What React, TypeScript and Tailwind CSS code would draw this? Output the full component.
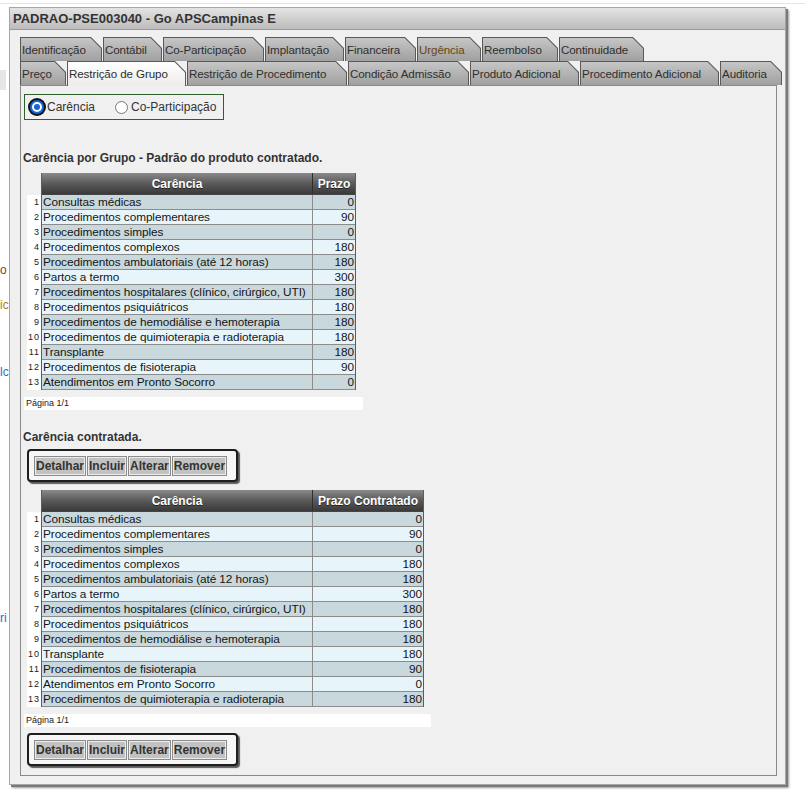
import React from "react";

type Row = [string, string];

const padrao: Row[] = [
  ["Consultas médicas", "0"],
  ["Procedimentos complementares", "90"],
  ["Procedimentos simples", "0"],
  ["Procedimentos complexos", "180"],
  ["Procedimentos ambulatoriais (até 12 horas)", "180"],
  ["Partos a termo", "300"],
  ["Procedimentos hospitalares (clínico, cirúrgico, UTI)", "180"],
  ["Procedimentos psiquiátricos", "180"],
  ["Procedimentos de hemodiálise e hemoterapia", "180"],
  ["Procedimentos de quimioterapia e radioterapia", "180"],
  ["Transplante", "180"],
  ["Procedimentos de fisioterapia", "90"],
  ["Atendimentos em Pronto Socorro", "0"],
];

const contratada: Row[] = [
  ["Consultas médicas", "0"],
  ["Procedimentos complementares", "90"],
  ["Procedimentos simples", "0"],
  ["Procedimentos complexos", "180"],
  ["Procedimentos ambulatoriais (até 12 horas)", "180"],
  ["Partos a termo", "300"],
  ["Procedimentos hospitalares (clínico, cirúrgico, UTI)", "180"],
  ["Procedimentos psiquiátricos", "180"],
  ["Procedimentos de hemodiálise e hemoterapia", "180"],
  ["Transplante", "180"],
  ["Procedimentos de fisioterapia", "90"],
  ["Atendimentos em Pronto Socorro", "0"],
  ["Procedimentos de quimioterapia e radioterapia", "180"],
];

const tabsTop = [
  { label: "Identificação", w: "w-[82px]" },
  { label: "Contábil", w: "w-[59px]" },
  { label: "Co-Participação", w: "w-[101px]" },
  { label: "Implantação", w: "w-[79px]" },
  { label: "Financeira", w: "w-[71px]" },
  { label: "Urgência", w: "w-[64px]", color: "text-[#6a4512]" },
  { label: "Reembolso", w: "w-[76px]" },
  { label: "Continuidade", w: "w-[85px]" },
];

const tabsBottom = [
  { label: "Preço", w: "w-[46px]" },
  { label: "Restrição de Grupo", w: "w-[119px]", active: true },
  { label: "Restrição de Procedimento", w: "w-[160px]" },
  { label: "Condição Admissão", w: "w-[121px]" },
  { label: "Produto Adicional", w: "w-[109px]" },
  { label: "Procedimento Adicional", w: "w-[139px]" },
  { label: "Auditoria", w: "w-[62px]" },
];

function Tab({ label, w, active, color }: { label: string; w: string; active?: boolean; color?: string }) {
  return (
    <div
      className={`${w} ${active ? "relative z-10 -mb-px" : ""} shrink-0 bg-[#595959] px-px pt-px mr-px [clip-path:polygon(0_0,calc(100%_-_11px)_0,100%_11px,100%_100%,0_100%)]`}
    >
      <div
        className={`h-full flex items-center pl-px text-[11.6px] tracking-[-0.1px] whitespace-nowrap ${color ?? "text-[#2e2e2e]"} ${
          active ? "bg-gradient-to-b from-[#ffffff] to-[#ececec]" : "bg-gradient-to-b from-[#c6c6c6] to-[#a0a0a0]"
        } [clip-path:polygon(0_0,calc(100%_-_10.5px)_0,100%_10.5px,100%_100%,0_100%)]`}
      >
        {label}
      </div>
    </div>
  );
}

function Grid({ rows, col2, total, page }: { rows: Row[]; col2: string; total: string; page: string }) {
  return (
    <>
      <div className="flex mt-[8px] ml-[6px]">
        <div className="w-[14px] flex flex-col pt-[22px]">
          <div className="bg-white">
            {rows.map((_, i) => (
              <div key={i} className="h-[15px] flex items-center justify-end pr-px text-[9px] leading-none text-[#222] tracking-[1px]">
                {i + 1}
              </div>
            ))}
          </div>
        </div>
        <div className={`${total} border-l border-r border-[#5c5c5c]`}>
          <div className="h-[22px] flex bg-gradient-to-b from-[#8a8a8a] via-[#5a5a5a] to-[#3a3a3a] text-white font-bold text-[12px] border-b border-[#444]">
            <div className="w-[271px] flex items-center justify-center border-r border-[#2e2e2e] [text-shadow:0_1px_0_#222]">Carência</div>
            <div className="flex-1 flex items-center justify-center [text-shadow:0_1px_0_#222]">{col2}</div>
          </div>
          {rows.map(([name, val], i) => (
            <div
              key={i}
              className={`h-[15px] flex text-[11.8px] tracking-[-0.08px] leading-[15px] text-[#151515] border-b border-[#8c8c8c] ${
                i % 2 === 0 ? "bg-[#c9d8dc]" : "bg-[#e7f5fa]"
              }`}
            >
              <div className="w-[271px] pl-px whitespace-nowrap overflow-hidden border-r border-[#8c8c8c]">{name}</div>
              <div className="flex-1 text-right pr-px">{val}</div>
            </div>
          ))}
        </div>
      </div>
      <div className={`${page} ml-[3px] mt-[7px] h-[13px] bg-white text-[9px] leading-[13px] pl-[2px] text-[#222]`}>Página 1/1</div>
    </>
  );
}

function Buttons() {
  return (
    <div className="ml-[6px] w-[211px] h-[33px] rounded-[4px] border-2 border-[#1e1e1e] bg-[#f6f6f6] shadow-[2px_2px_1px_#5a5a5a] flex items-center pl-[5px] gap-[1px]">
      {["Detalhar", "Incluir", "Alterar", "Remover"].map((b) => (
        <button
          key={b}
          className="h-[20px] px-px border border-[#8a8a8a] bg-[#c2c2c2] shadow-[inset_0_0_0_1px_#ececec] text-[12px] font-bold text-[#333] leading-none"
        >
          {b}
        </button>
      ))}
    </div>
  );
}

export default function App() {
  return (
    <div className="w-[805px] h-[795px] bg-white overflow-hidden font-['Liberation_Sans',Arial,sans-serif] flex flex-col">
      <div className="mt-[3px] h-px bg-[#e6e6e6]" />
      <div className="flex mt-[3px]">
        {/* sliver of the page behind the dialog */}
        <div className="w-[9px] shrink-0 overflow-hidden flex flex-col text-[12px] leading-[14px]">
          <div className="mt-[63px] h-[20px] w-[6px] bg-[#e6e6e6]" />
          <div className="mt-[173px] h-[14px] text-[#8a3b2c]">o</div>
          <div className="mt-[21px] h-[14px] text-[#b07a1a]">ic</div>
          <div className="mt-[53px] h-[14px] text-[#2a6cc8]">lc</div>
          <div className="mt-[232px] h-[14px] text-[#2a6cc8]">ri</div>
        </div>

        {/* dialog window */}
        <div className="w-[777px] shrink-0 border border-[#a6a6a6] bg-[#f0f0f0] shadow-[2px_2px_0_#7a7a7a,3px_3px_2px_#9a9a9a]">
          <div className="h-[22px] flex items-center pl-[3px] bg-gradient-to-b from-[#e4e4e4] to-[#bcbcbc] border-b border-[#9a9a9a] text-[13px] font-bold text-[#333]">
            PADRAO-PSE003040 - Go APSCampinas E
          </div>
          <div className="pt-[7px] pl-[10px] pr-[7px] pb-[8px]">
            <div className="flex h-[24px]">
              {tabsTop.map((t) => (
                <Tab key={t.label} {...t} />
              ))}
            </div>
            <div className="flex h-[24px]">
              {tabsBottom.map((t) => (
                <Tab key={t.label} {...t} />
              ))}
            </div>
            <div className="w-[757px] border border-[#8a8a8a] bg-[#f0f0f0] flex flex-col items-start">
              <div className="mt-[8px] ml-[3px] w-[200px] h-[26px] border border-[#2f5f2f] flex items-center pl-[3px] text-[12px] text-[#333]">
                <span className="w-[18px] h-[18px] rounded-full bg-[#111] p-[2px] flex">
                  <span className="flex-1 rounded-full border-2 border-[#1467d9] bg-white p-[2px] flex">
                    <span className="flex-1 rounded-full bg-[#1467d9]" />
                  </span>
                </span>
                <span className="ml-px">Carência</span>
                <span className="ml-[20px] w-[13px] h-[13px] rounded-full border border-[#777] bg-white" />
                <span className="ml-[3px]">Co-Participação</span>
              </div>

              <div className="mt-[31px] ml-[2px] h-[14px] leading-[14px] text-[12px] font-bold text-[#333]">
                Carência por Grupo - Padrão do produto contratado.
              </div>
              <Grid rows={padrao} col2="Prazo" total="w-[315px]" page="w-[339px]" />

              <div className="mt-[20px] ml-[2px] h-[14px] leading-[14px] text-[12px] font-bold text-[#333]">Carência contratada.</div>
              <div className="mt-[5px]">
                <Buttons />
              </div>
              <Grid rows={contratada} col2="Prazo Contratado" total="w-[383px]" page="w-[407px]" />
              <div className="mt-[6px] mb-[9px]">
                <Buttons />
              </div>
            </div>
          </div>
        </div>
      </div>
    </div>
  );
}
